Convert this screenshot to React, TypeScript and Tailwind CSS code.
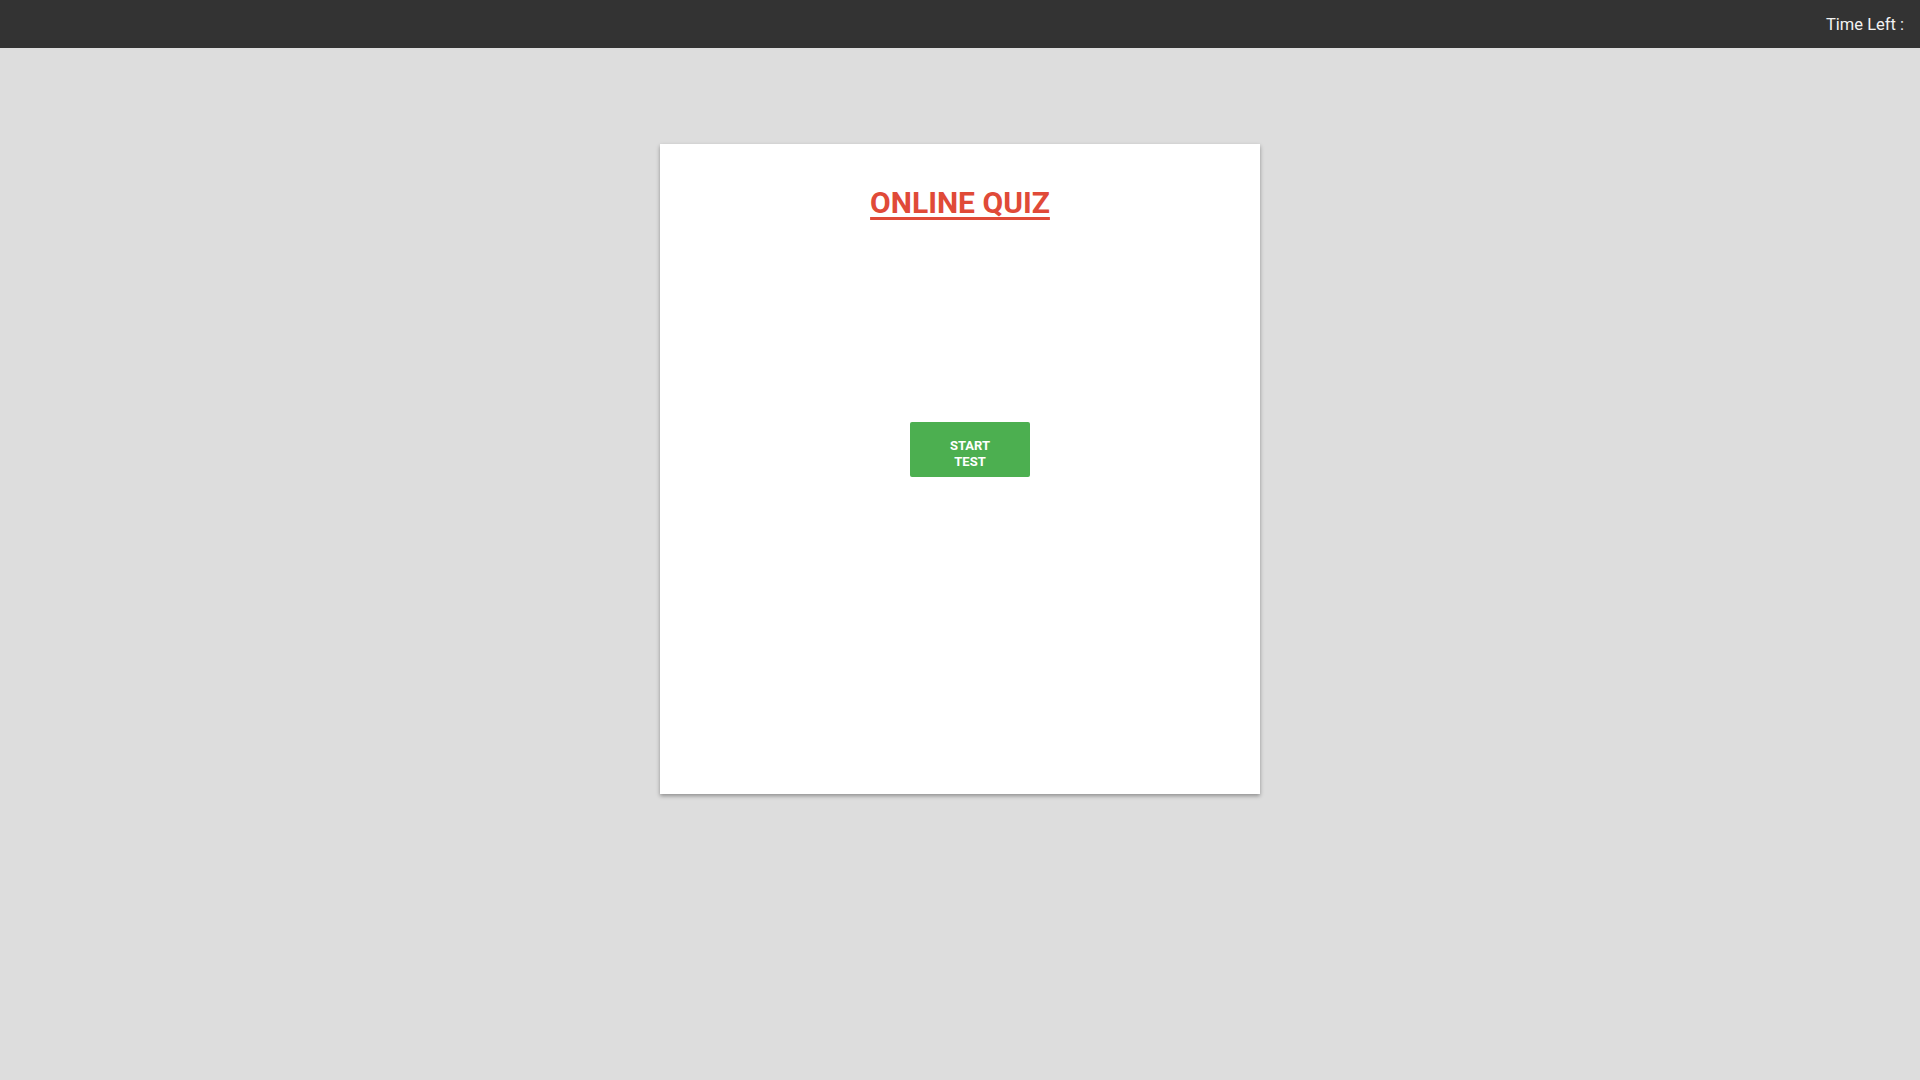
export default function App() {
  return (
    <div className="min-h-screen w-full bg-[#dddddd]" style={{ fontFamily: "Roboto, 'Noto Sans', sans-serif" }}>
      <div className="h-[48px] bg-[#333333] flex items-center justify-end px-[16px]">
        <span className="text-[16.5px] text-[#f2f2f2] pt-[2px]">Time Left :</span>
      </div>
      <div className="flex justify-center pt-[96px]">
        <div className="w-[600px] h-[650px] bg-white shadow-[0_2px_4px_rgba(0,0,0,0.35)] flex flex-col items-center">
          <h1 className="mt-[41px] text-[30px] leading-[36px] font-bold text-[#e04a38] underline decoration-[3px] underline-offset-[4px]">ONLINE QUIZ</h1>
          <div className="flex-1 flex items-start justify-center w-full pt-[201px]">
            <button className="ml-[20px] w-[120px] rounded-[2px] bg-[#4caf50] text-white text-[13px] leading-[16px] font-bold px-[24px] pt-[16px] pb-[7px]">
              START TEST
            </button>
          </div>
        </div>
      </div>
    </div>
  );
}
